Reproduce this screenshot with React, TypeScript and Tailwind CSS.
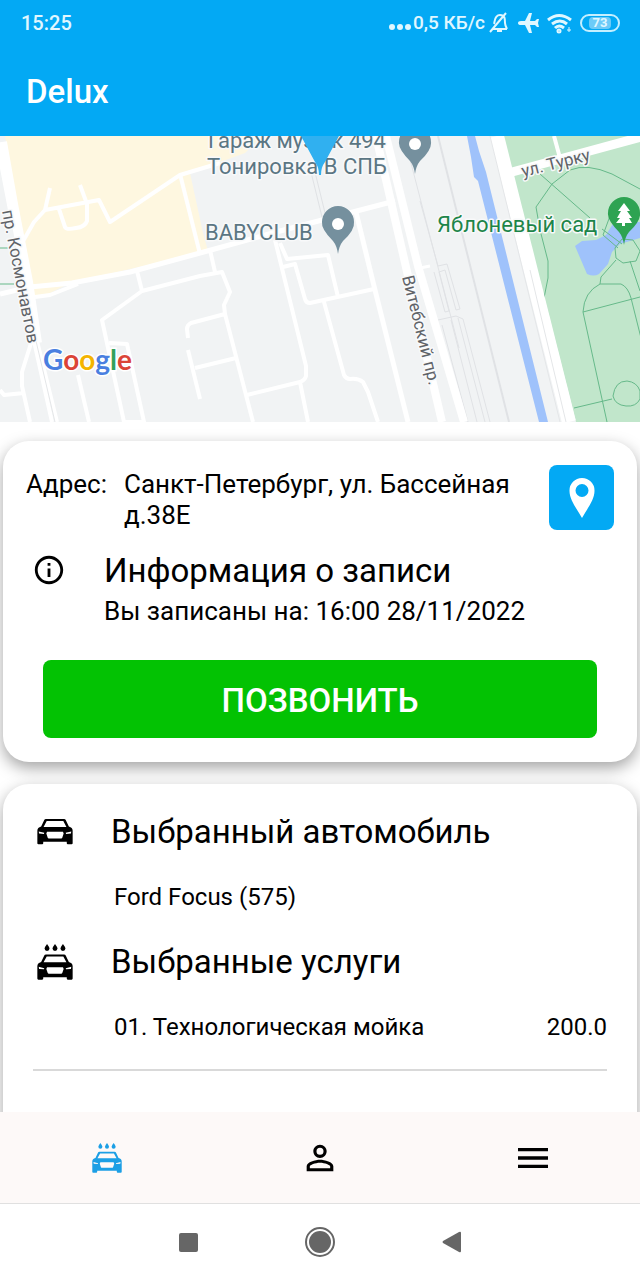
import { MdInfoOutline, MdMenu, MdPersonOutline } from "react-icons/md";

interface Service {
  code: string;
  name: string;
  price: string;
}

const services: Service[] = [{ code: "01", name: "Технологическая мойка", price: "200.0" }];

interface CarIconProps {
  className: string;
  wash?: boolean;
}

function CarIcon({ className, wash = false }: CarIconProps) {
  return (
    <svg
      viewBox={wash ? "0 -30 104 104" : "0 0 104 74"}
      fill="currentColor"
      fillRule="evenodd"
      className={className}
      aria-hidden="true"
    >
      {wash && (
        <>
          <path d="M29-30q7 9 7 13a7 7 0 0 1-14 0q0-4 7-13z" />
          <path d="M52-30q7 9 7 13a7 7 0 0 1-14 0q0-4 7-13z" />
          <path d="M75-30q7 9 7 13a7 7 0 0 1-14 0q0-4 7-13z" />
        </>
      )}
      <path d="M12 22 21 3q1-3 5-3h52q4 0 5 3l9 19q11 3 11 12v36q0 3-3 3H89q-3 0-3-3v-4H18v4q0 3-3 3H4q-3 0-3-3V34q0-9 11-12zM28 6 19 23h66L76 6zM29 37l-2 5 4 12q1 2 3 2h36q2 0 3-2l4-12-2-5zM5 36l1 6 14 1 1-3zM99 36l-16 4 1 3 14-1z" />
    </svg>
  );
}

function StatusIcons() {
  return (
    <div className="flex items-center gap-2">
      <svg width="20" height="22" viewBox="0 0 20 22" fill="none" stroke="currentColor" strokeWidth="2" aria-hidden="true">
        <path d="M3 17h15M5 12c1-2 0-9 6-9 5 0 5 4 5 8 0 2 1 4 2 6M1 20 17 1" />
        <path d="M8 19h5" />
      </svg>
      <svg width="22" height="20" viewBox="0 0 22 20" fill="currentColor" aria-hidden="true">
        <path d="M1 10q0-2 3-2h4L12 0h3l-2 8h5l2-2h2l-1 4 1 4h-2l-2-2h-5l2 8h-3l-4-8H4q-3 0-3-2z" />
      </svg>
      <svg width="25" height="22" viewBox="0 0 25 22" fill="none" stroke="currentColor" strokeWidth="3" aria-hidden="true">
        <path d="M1 8q11-9 23 0M5 12q8-6 15 0M8 16q4-4 9 0" />
        <circle cx="12" cy="19" r="1" />
        <path d="M22 15v5M20 18h4" strokeWidth="1" />
      </svg>
      <span className="flex h-[18px] w-10 items-center justify-center rounded-full border-2 border-[#c4efff]">
        <span className="rounded-sm bg-[#6ccbf8] px-1 text-[13px] leading-3 font-bold">73</span>
      </span>
    </div>
  );
}

function MapView() {
  return (
    <svg
      viewBox="0 136 640 286"
      preserveAspectRatio="xMidYMin slice"
      className="block h-[286px] w-full shrink-0 bg-[#f1f3f4]"
      role="img"
      aria-label="Карта"
    >
      {/* Built-up area */}
      <path fill="#fef7e0" d="M5 136h257l-17 17-55 20 13 60 5 18-138 32-22 11-14 3z" />
      {/* Park */}
      <path fill="#c1e6cb" d="M503 136h137v286h-64z" />
      <path
        fill="#9fc2fb"
        d="M467 136h8l4 15 7 21 62 250h-9l-61-241-4-4-3-20zM575 246l7-5 14-1 10-5 8-13h26v16l-20 6-8 8-4 12-9 10q-5 3-12 0z"
      />
      <g fill="none" stroke="#66b98a" strokeWidth="1">
        <path d="M540 174l50 44M640 189l-28-15q-25-11-42-4l-18 14-16 23 4 23 8 31v17l-4 20M602 229l20 15M610 216l-7 19 15 13M615 248l7-9 11 1 7 11-4 10-13 2-7-5zM616 260l-15 17-1 7h21q7 3 10 14l10 40M600 284q-16 8-17 28l24 110M583 312l57-15M630 261l10 30M574 408l38-9M613 396q2-15 14-15 10 1 13 10v8q-4 8-14 7-11-1-13-10zM0 248h10M0 284h14" />
      </g>
      {/* Railway */}
      <g fill="none" stroke="#e0e2e5" strokeWidth="1">
        <path strokeWidth="2" d="M438 136l27 109 44 177" />
        <path d="M420 201l18 65 9-2 13 45-4 1-11-40-6 2 10 39-4 1-11-40M438 320l18-4 7 3 27 103M442 325l26 97M451 320l26 102M458 318l27 104M310 168l13 53M314 168l13 53M405 140l54 208" />
      </g>
      <g fill="none" stroke="#fff" strokeLinejoin="round">
        <path strokeWidth="10" d="M2 142l11 62 15 78 9 61" />
        <path strokeWidth="4" d="M0 158l10 52M32 340l-10 32v14l8 36M34 341l18 81M37 341l20 81M0 390l4 5 20-2" />
        <path strokeWidth="5" d="M0 294l30-7 42-4 58-11 70-19 80-22 115-30" />
        <path strokeWidth="4" d="M35 297l15-2 28-11M22 243l12-21 11-12 54-10 11 22 70-47 40-12M50 188l-5 22M80 185l7 19v17q-2 6-11 7-10 2-11-1l-6-18" />
        <path strokeWidth="4" d="M180 174l20 80M137 271l5 20 58-15 22-4 8 20-6 13 1 9 28 108M142 291l-40 29 22 102M109 343l18 1 17 78h-21M78 375l11 47M210 250l5 22M225 314l-34 9q-4 2-4 6l1 9M188 350l12 49M195 368l41-10" />
        <path strokeWidth="4" d="M275 240l31 126v10q-1 4-6 6l-53 13M300 382l8 40M280 243l7 16 41-4 10 42M283 267l12-3 10 35q1 4 5 4l64-14M324 302l20 73q2 4 6 4 8-1 13 3l5 10 10 30" />
        <path strokeWidth="5" d="M356 212l18 74 34 136" />
        <path strokeWidth="8" d="M376 136l32 140 34 146M386 136l32 130 46 156" />
        <path strokeWidth="3" d="M420 268l10-2" />
        <path strokeWidth="14" d="M497 136l72 286" />
        <path strokeWidth="9" d="M505 174l136-37" />
        <path strokeWidth="4" d="M554 136l6 22" />
      </g>
      <g fill="none" stroke="#e4e6e8" strokeWidth="1">
        <path d="M530 270l36 152M36 341l19 81M490 136l70 286" />
      </g>

      {/* Labels */}
      <g
        fontFamily="Roboto, sans-serif"
        fontSize="22"
        fill="#5b7683"
        stroke="#f8f9fa"
        strokeWidth="3"
        strokeLinejoin="round"
        paintOrder="stroke"
      >
        <text x="208" y="148">Гараж музык 494</text>
        <text x="207" y="174">Тонировка В СПБ</text>
        <text x="205" y="240">BABYCLUB</text>
        <text x="437" y="232" fill="#1d8549">Яблоневый сад</text>
        <g fontSize="17" fill="#5f6368">
          <text transform="translate(2 211) rotate(79)">пр. Космонавтов</text>
          <text transform="translate(402 277) rotate(76)">Витебский пр.</text>
          <text transform="translate(523 177) rotate(-14)">ул. Турку</text>
        </g>
      </g>
      <text
        x="43"
        y="370"
        fontFamily="Lato, sans-serif"
        fontSize="28"
        fontWeight="700"
        stroke="#fff"
        strokeWidth="3"
        paintOrder="stroke"
      >
        <tspan fill="#4a7fe0">G</tspan>
        <tspan fill="#db4437">o</tspan>
        <tspan fill="#f4b400">o</tspan>
        <tspan fill="#4a7fe0">g</tspan>
        <tspan fill="#34a05a">l</tspan>
        <tspan fill="#db4437">e</tspan>
      </text>

      {/* Pins */}
      <g fill="#75909e">
        <path d="M338 254q-1-8-5-13-12-12-11-19a16 16 0 0 1 32 0q1 8-11 19-4 5-5 13z" />
        <path d="M415 174q-1-8-5-13-12-12-11-19a16 16 0 0 1 32 0q1 8-11 19-4 5-5 13z" />
      </g>
      <circle cx="338" cy="224" r="6" fill="#fff" />
      <circle cx="415" cy="144" r="6" fill="#fff" />
      <path fill="#2ea352" d="M624 245q-1-8-5-13-12-12-11-19a16 16 0 0 1 32 0q1 8-11 19-4 5-5 13z" />
      <path fill="#fff" d="M624 203l6 8h-3l5 7h-3l3 5h-7v3h-3v-3h-6l4-5h-3l4-7h-3z" />
      <path fill="#30b0f0" d="M301 136h38l-14 26q-4 5-4 13h-2q0-8-4-13z" />
    </svg>
  );
}

export default function App() {
  return (
    <div className="flex h-screen flex-col bg-white font-[Roboto,sans-serif] text-black">
      <header className="shrink-0 bg-[#03a9f4] text-white">
        <div className="flex h-[46px] items-center justify-between pr-5 pl-[21px] text-xl font-medium text-[#e0f7ff]">
          <span>15:25</span>
          <div className="flex items-center gap-1">
            <div className="flex items-center text-[19px]">
              <span className="flex gap-0.5 pt-2 pr-0.5" aria-hidden="true">
                <i className="size-[6px] rounded-full bg-current" />
                <i className="size-[6px] rounded-full bg-current" />
                <i className="size-[6px] rounded-full bg-current" />
              </span>
              <span>0,5 КБ/с</span>
            </div>
            <StatusIcons />
          </div>
        </div>
        <h1 className="flex h-[90px] items-center px-[26px] pt-0.5 text-[33px] font-medium">Delux</h1>
      </header>

      <main className="flex min-h-0 flex-1 flex-col overflow-y-auto [scrollbar-width:none]">
        <MapView />

        <div className="flex flex-col gap-[22px] px-[3px] pt-[19px]">
          {/* Appointment */}
          <section className="rounded-[26px] bg-white px-[23px] pt-6 pb-6 shadow-[0_6px_16px_rgba(0,0,0,0.36)]">
            <div className="flex items-start text-[26px] leading-[31px]">
              <span className="w-[98px] shrink-0 pt-1">Адрес:</span>
              <address className="flex-1 pt-1 not-italic">Санкт-Петербург, ул. Бассейная д.38Е</address>
              <button
                type="button"
                aria-label="Показать на карте"
                className="flex size-[65px] shrink-0 items-center justify-center rounded-lg bg-[#03a9f4] text-white"
              >
                <svg width="26" height="40" viewBox="0 0 26 40" fill="currentColor" fillRule="evenodd" aria-hidden="true">
                  <path d="M13 0a12.500 12.500 0 0 1 12.500 13C25.500 22 18 31 13 40 8 31 .5 22 .5 13A12.500 12.500 0 0 1 13 0zm0 6a6.500 6.500 0 1 0 0 13 6.500 6.500 0 0 0 0-13z" />
                </svg>
              </button>
            </div>
            <div className="mt-5 flex">
              <div className="w-[78px] shrink-0 pt-0.5 pl-[6px]">
                <MdInfoOutline size={34} />
              </div>
              <div>
                <h2 className="text-[33px] leading-10">Информация о записи</h2>
                <p className="text-[26px] leading-10">Вы записаны на: 16:00 28/11/2022</p>
              </div>
            </div>
            <button
              type="button"
              className="mx-auto mt-[29px] block h-[78px] w-[calc(100%-34px)] rounded-lg bg-[#03c203] pt-1 text-[33px] font-medium text-white"
            >
              ПОЗВОНИТЬ
            </button>
          </section>

          {/* Car and services */}
          <section className="rounded-t-[26px] bg-white px-[30px] pt-7 pb-16 shadow-[0_6px_16px_rgba(0,0,0,0.36)]">
            <div className="flex h-10 items-center">
              <CarIcon className="ml-1 w-[36px]" />
              <h2 className="ml-[38px] text-[33px]">Выбранный автомобиль</h2>
            </div>
            <p className="mt-[25px] pl-[81px] text-2xl leading-10">Ford Focus (575)</p>
            <div className="mt-[25px] flex h-10 items-center">
              <CarIcon className="ml-1 w-[36px]" wash />
              <h2 className="ml-[38px] text-[33px]">Выбранные услуги</h2>
            </div>
            <ul className="mt-[25px]">
              {services.map((service) => (
                <li
                  key={service.code}
                  className="flex justify-between border-b-2 border-[#d9d9d9] pb-[22px] pl-[81px] text-2xl leading-10"
                >
                  <span>
                    {service.code}. {service.name}
                  </span>
                  <span>{service.price}</span>
                </li>
              ))}
            </ul>
          </section>
        </div>
      </main>

      <nav className="z-10 grid h-[92px] shrink-0 grid-cols-3 border-b border-[#e0e0e0] bg-[#fdf9f8]">
        <button type="button" aria-label="Запись" className="flex items-center justify-center text-[#1c9fe5]">
          <CarIcon className="w-[30px]" wash />
        </button>
        <button type="button" aria-label="Профиль" className="flex items-center justify-center">
          <MdPersonOutline size={40} />
        </button>
        <button type="button" aria-label="Меню" className="flex items-center justify-center">
          <MdMenu size={40} />
        </button>
      </nav>

      {/* System navigation */}
      <div className="flex h-[76px] shrink-0 items-center justify-center gap-[98px] bg-white text-[#666]">
        <button type="button" aria-label="Недавние" className="flex w-[34px] justify-center">
          <span className="size-[19px] rounded-xs bg-current" />
        </button>
        <button type="button" aria-label="Домой" className="flex w-[34px] justify-center">
          <span className="flex size-[30px] items-center justify-center rounded-full border-2 border-current">
            <span className="size-[22px] rounded-full bg-current" />
          </span>
        </button>
        <button type="button" aria-label="Назад" className="flex w-[34px] justify-center">
          <svg width="20" height="22" viewBox="0 0 20 22" fill="currentColor" aria-hidden="true">
            <path d="M1 10 17 1q2-1 2 1v18q0 2-2 1L1 12q-1-1 0-2z" />
          </svg>
        </button>
      </div>
    </div>
  );
}
